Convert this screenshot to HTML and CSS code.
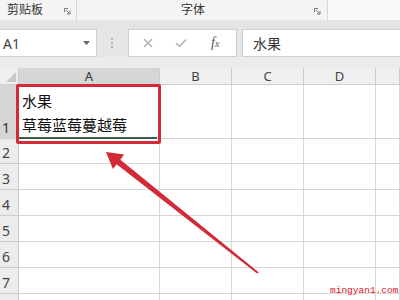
FILE: index.html
```html
<!DOCTYPE html>
<html lang="zh-CN">
<head>
<meta charset="utf-8">
<link rel="stylesheet" href="styles.css">
</head>
<body>
<div class="page">
  <div class="ribbon">
    <div class="grp grp-clip">
      <span class="glabel">剪贴板</span>
      <svg class="launch" width="7" height="7" viewBox="0 0 7 7"><path d="M0.5 4V0.5H4M2 2L6 6M6 3V6H3" fill="none" stroke="#7a7a7a" stroke-width="1"/></svg>
    </div>
    <div class="grp grp-font">
      <span class="glabel">字体</span>
      <svg class="launch" width="7" height="7" viewBox="0 0 7 7"><path d="M0.5 4V0.5H4M2 2L6 6M6 3V6H3" fill="none" stroke="#7a7a7a" stroke-width="1"/></svg>
    </div>
    <div class="grp grp-rest"></div>
  </div>
  <div class="band"></div>
  <div class="fbar">
    <div class="namebox">
      <span class="ref">A1</span>
      <svg width="7" height="4" viewBox="0 0 7 4"><polygon points="0,0 7,0 3.5,4" fill="#666"/></svg>
    </div>
    <div class="grip"><i></i><i></i><i></i></div>
    <div class="cmds">
      <svg width="10" height="10" viewBox="0 0 10 10"><path d="M1 1L9 9M9 1L1 9" stroke="#b0b0b0" stroke-width="1.5"/></svg>
      <svg width="12" height="10" viewBox="0 0 12 10"><path d="M1 5L4.5 8.5L11 1.5" fill="none" stroke="#b0b0b0" stroke-width="1.5"/></svg>
      <span class="fx">f<span class="fxs">x</span></span>
    </div>
    <div class="input">水果</div>
  </div>
  <div class="gap"></div>
  <div class="sheet">
    <div class="hd corner"><svg width="10" height="10" viewBox="0 0 10 10"><polygon points="10,0 10,10 0,10" fill="#c9c9c9"/></svg></div>
    <div class="hd col sel">A</div>
    <div class="hd col">B</div>
    <div class="hd col">C</div>
    <div class="hd col">D</div>
    <div class="hd col"></div>

    <div class="hd row sel">1</div>
    <div class="cell a1"><span>水果</span><span>草莓蓝莓蔓越莓</span></div>
    <div class="cell"></div><div class="cell"></div><div class="cell"></div><div class="cell"></div>

    <div class="hd row">2</div>
    <div class="cell"></div><div class="cell"></div><div class="cell"></div><div class="cell"></div><div class="cell"></div>
    <div class="hd row">3</div>
    <div class="cell"></div><div class="cell"></div><div class="cell"></div><div class="cell"></div><div class="cell"></div>
    <div class="hd row">4</div>
    <div class="cell"></div><div class="cell"></div><div class="cell"></div><div class="cell"></div><div class="cell"></div>
    <div class="hd row">5</div>
    <div class="cell"></div><div class="cell"></div><div class="cell"></div><div class="cell"></div><div class="cell"></div>
    <div class="hd row">6</div>
    <div class="cell"></div><div class="cell"></div><div class="cell"></div><div class="cell"></div><div class="cell"></div>
    <div class="hd row">7</div>
    <div class="cell"></div><div class="cell"></div><div class="cell"></div><div class="cell"></div><div class="cell"></div>
    <div class="hd row"></div>
    <div class="cell"></div><div class="cell"></div><div class="cell"></div><div class="cell"></div><div class="cell"></div>
  </div>

  <div class="redbox"></div>
  <svg class="arrow" width="400" height="300" viewBox="0 0 400 300">
    <polygon points="106,152 124.1,154.4 120.4,159.7 258.6,272.2 257.4,273.8 116.6,164.3 112.9,169" fill="#d22a36"/>
  </svg>
  <div class="watermark">mingyan1.com</div>
</div>
</body>
</html>
```
FILE: styles.css
```css
* { box-sizing: border-box; }
html, body { margin: 0; padding: 0; }
body { width: 400px; height: 300px; overflow: hidden; background: #fff;
  font-family: "Noto Sans", "Noto Sans CJK SC", sans-serif; }
.page { position: relative; width: 400px; height: 300px; overflow: hidden; }

.ribbon { display: flex; height: 20px; background: #f4f4f4; }
.grp { display: flex; align-items: center; height: 20px; position: relative; }
.grp-clip { width: 77px; border-right: 1px solid #d8d8d8; padding-left: 7px; }
.grp-font { width: 251px; border-right: 1px solid #d8d8d8; padding-left: 104px; }
.grp-rest { flex: 1; background: #f9f9f9; }
.glabel { font-family: "Noto Sans CJK SC", sans-serif; font-size: 12px; line-height: 18px; color: #333; margin-top: -2px; }
.launch { margin-left: auto; margin-right: 5px; margin-top: 3px; }
.grp-font .launch { margin-right: 6px; }

.band { height: 9px; background: #e4e4e4; }

.fbar { display: flex; height: 28px; background: #e6e6e6; }
.namebox { width: 97px; height: 28px; background: #fff; border: 1px solid #cfcfcf; border-left: none;
  display: flex; align-items: center; padding: 0 6px 0 3px; }
.ref { font-size: 14px; color: #444; flex: 1; }
.grip { width: 31px; display: flex; flex-direction: column; align-items: center; justify-content: center; gap: 2px; padding-right: 1px; }
.grip i { display: block; width: 2px; height: 2px; background: #b4b4b4; }
.cmds { width: 109px; height: 28px; background: #fff; border: 1px solid #cfcfcf;
  display: flex; align-items: center; padding-left: 14px; gap: 22px; }
.fx { font-family: "Liberation Serif", serif; font-style: italic; font-size: 14px; color: #555; margin-left: 2px; }
.fxs { font-size: 10px; }
.input { flex: 1; margin-left: 5px; height: 28px; background: #fff; border: 1px solid #cfcfcf; border-right: none;
  font-family: "Noto Sans CJK SC", sans-serif; font-size: 14px; line-height: 26px; color: #333; padding-left: 10px; }

.gap { height: 11px; background: #ebebeb; }

.sheet { display: grid; grid-template-columns: 19px 141px 72px 72px 72px 24px;
  grid-template-rows: 17px 54px 25px 26px 26px 26px 26px 26px 26px; }
.hd { background: #efefef; border-right: 1px solid #cdcdcd; border-bottom: 1px solid #cdcdcd; color: #444; }
.corner { display: flex; align-items: flex-end; justify-content: flex-end; padding: 0 2px 2px 0; }
.col { font-size: 13px; line-height: 16px; text-align: center; }
.row { font-size: 14px; display: flex; align-items: flex-end; padding: 0 0 1px 2px; line-height: 18px; background: #ececec; }
.hd.sel { background: #d6d6d6; color: #333; }
.cell { border-right: 1px solid #d6d6d6; border-bottom: 1px solid #d6d6d6; }
.a1 { position: relative; display: flex; flex-direction: column; justify-content: flex-end;
  padding: 0 0 1px 3px; font-family: "Noto Sans CJK SC", sans-serif; font-size: 15px; line-height: 24px; color: #111; }
.a1::after { content: ""; position: absolute; left: 0; right: 2px; bottom: -1px; height: 2px; background: #3d5c48; }

.redbox { position: absolute; left: 16px; top: 84px; width: 145px; height: 60px; border: 3px solid #d22a36; border-radius: 2px; }
.arrow { position: absolute; left: 0; top: 0; }
.watermark { position: absolute; left: 330px; top: 285px; font-family: "Liberation Mono", monospace; font-size: 9.5px; line-height: 12px; color: #e5121c; white-space: nowrap; }
```
